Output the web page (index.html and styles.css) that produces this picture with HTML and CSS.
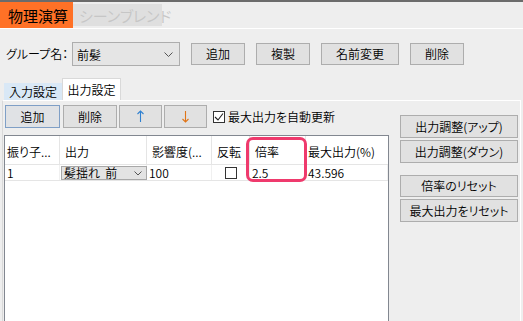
FILE: index.html
```html
<!DOCTYPE html>
<html lang="ja">
<head>
<meta charset="utf-8">
<title>物理演算</title>
<link rel="stylesheet" href="styles.css">
</head>
<body>
<div class="topline"></div>
<div class="modebar">
  <div class="mode active">物理演算</div>
  <div class="mode inactive">シーンブレンド</div>
</div>
<div class="grouprow">
  <span class="glabel">グループ名：</span>
  <div class="combo">
    <span>前髪</span>
    <svg class="chev" width="9" height="5" viewBox="0 0 9 5"><polyline points="0.5,0.5 4.5,4.5 8.5,0.5" fill="none" stroke="#555" stroke-width="1"/></svg>
  </div>
  <button class="btn w54">追加</button>
  <button class="btn w54">複製</button>
  <button class="btn w78">名前変更</button>
  <button class="btn w54">削除</button>
</div>
<div class="tabs">
  <div class="tab">入力設定</div>
  <div class="tab selected">出力設定</div>
</div>
<div class="panel">
  <div class="leftcol">
    <div class="toolbar">
      <button class="btn tb-add">追加</button>
      <button class="btn tb-del">削除</button>
      <button class="btn tb-arrow">
        <svg width="9" height="13" viewBox="0 0 9 13"><line x1="4.5" y1="1" x2="4.5" y2="12" stroke="#2f80d0" stroke-width="1.1"/><polyline points="1.5,4 4.5,1 7.5,4" fill="none" stroke="#2f80d0" stroke-width="1.1"/></svg>
      </button>
      <button class="btn tb-arrow">
        <svg width="9" height="13" viewBox="0 0 9 13"><line x1="4.5" y1="1" x2="4.5" y2="12" stroke="#e07518" stroke-width="1.1"/><polyline points="1.5,9 4.5,12 7.5,9" fill="none" stroke="#e07518" stroke-width="1.1"/></svg>
      </button>
      <span class="check">
        <span class="box"><svg width="10" height="10" viewBox="0 0 10 10"><polyline points="1,5 4,8 9,1.5" fill="none" stroke="#222" stroke-width="1.1"/></svg></span>
        <span class="checklabel">最大出力を自動更新</span>
      </span>
    </div>
    <div class="grid">
      <div class="row head">
        <div class="c first">振り子...</div>
        <div class="c">出力</div>
        <div class="c">影響度(...</div>
        <div class="c">反転</div>
        <div class="c">倍率</div>
        <div class="c last">最大出力(%)</div>
      </div>
      <div class="row data">
        <div class="c">1</div>
        <div class="c combo-cell">
          <div class="cellcombo">
            <span>髪揺れ&nbsp;&nbsp;前</span>
            <svg width="8" height="5" viewBox="0 0 8 5"><polyline points="0.5,0.5 4,4 7.5,0.5" fill="none" stroke="#555" stroke-width="1"/></svg>
          </div>
        </div>
        <div class="c">100</div>
        <div class="c center"><span class="cbox"></span></div>
        <div class="c">2.5</div>
        <div class="c">43.596</div>
      </div>
      <div class="hl"></div>
    </div>
  </div>
  <div class="rightcol">
    <button class="btn side">出力調整(アップ)</button>
    <button class="btn side">出力調整(ダウン)</button>
    <button class="btn side sep">倍率のリセット</button>
    <button class="btn side">最大出力をリセット</button>
  </div>
</div>
</body>
</html>
```
FILE: styles.css
```css
* { box-sizing: border-box; }
html, body { margin: 0; padding: 0; }
body {
  width: 523px;
  height: 321px;
  overflow: hidden;
  background: #eeeeee;
  font-family: "Noto Sans CJK JP", sans-serif;
  font-weight: 350;
  font-size: 12px;
  color: #000;
  font-feature-settings: "palt";
}
.topline { height: 2px; background: #6b6b6b; }
.modebar {
  display: flex;
  align-items: flex-start;
  height: 27px;
  border-bottom: 1px solid #ffffff;
}
.mode { font-size: 15px; white-space: nowrap; }
.mode.active {
  width: 73px;
  height: 26px;
  background: #ff7126;
  padding-left: 8px;
  line-height: 28px;
  font-weight: 400;
}
.mode.inactive {
  margin-top: 2px;
  width: 89px;
  height: 22px;
  background: #dfdfdf;
  color: #c6c6c6;
  padding-left: 6px;
  line-height: 24px;
}
.grouprow {
  display: flex;
  align-items: center;
  height: 24px;
  margin-top: 13px;
  padding-left: 6px;
}
.glabel { width: 66px; line-height: 24px; }
.combo {
  width: 108px;
  height: 24px;
  border: 1px solid #adadad;
  background: #e5e5e5;
  display: flex;
  align-items: center;
  justify-content: space-between;
  padding: 0 6px 0 4px;
}
.btn {
  height: 22px;
  padding: 0;
  background: #e1e1e1;
  border: 1px solid #adadad;
  font-family: inherit;
  font-weight: inherit;
  font-size: 12px;
  font-feature-settings: "palt";
  color: #000;
  line-height: 18px;
  display: flex;
  align-items: center;
  justify-content: center;
}
.grouprow .btn { margin-left: 11px; }
.w54 { width: 54px; }
.w78 { width: 78px; }
.tabs {
  display: flex;
  align-items: flex-end;
  height: 22px;
  margin-top: 12px;
  padding-left: 4px;
}
.tab {
  width: 58px;
  height: 17px;
  background: #d9e8f6;
  text-align: center;
  line-height: 17px;
}
.tab.selected {
  width: 59px;
  height: 22px;
  background: #ffffff;
  border: 1px solid #d9d9d9;
  border-bottom: none;
  line-height: 21px;
}
.panel {
  margin: 0 2px;
  height: 221px;
  border-top: 1px solid #ffffff;
  border-left: 1px solid #d9d9d9;
  border-right: 1px solid #ffffff;
  padding-left: 1px;
  display: flex;
}
.leftcol { width: 385px; }
.toolbar {
  display: flex;
  align-items: center;
  height: 23px;
  margin-top: 4px;
}
.toolbar .btn { height: 23px; }
.tb-add { width: 55px; margin-left: 1px; border-color: #7f9fc6; background: #e0e2e5; }
.tb-del { width: 54px; margin-left: 3px; }
.tb-arrow { width: 43px; margin-left: 2px; }
.check { display: flex; align-items: center; margin-left: 6px; }
.box {
  width: 12px;
  height: 12px;
  border: 1px solid #333;
  background: #fff;
  display: flex;
  align-items: center;
  justify-content: center;
}
.checklabel { margin-left: 3px; }
.grid {
  position: relative;
  margin-top: 7px;
  height: 200px;
  background: #ffffff;
  border: 1px solid #828790;
  border-bottom: none;
}
.row {
  display: grid;
  grid-template-columns: 55px 87px 65px 38px 56px 82px;
}
.row.head { height: 29px; border-bottom: 1px solid #e5e5e5; }
.row.head .c {
  display: flex;
  align-items: center;
  padding-left: 5px;
  padding-top: 2px;
  border-right: 1px solid #e5e5e5;
  white-space: nowrap;
  overflow: hidden;
}
.row.head .c.first { padding-left: 2px; }
.row.head .c.last { padding-left: 2px; border-right: none; }
.row.data { height: 16px; border-bottom: 1px solid #e5e5e5; }
.row.data .c {
  padding-left: 2px;
  line-height: 15px;
  border-right: 1px solid #f0f0f0;
  white-space: nowrap;
}
.row.data .c.combo-cell { padding: 1px 0 0 1px; }
.cellcombo {
  height: 14px;
  width: 86px;
  background: #e3e3e3;
  border: 1px solid #a8a8a8;
  display: flex;
  align-items: center;
  justify-content: space-between;
  padding: 0 4px 0 2px;
  line-height: 12px;
}
.row.data .c.center { display: flex; justify-content: center; align-items: center; padding-left: 0; }
.cbox { width: 12px; height: 12px; border: 1px solid #333; background: #fff; }
.hl {
  position: absolute;
  left: 241px;
  top: 1px;
  width: 61px;
  height: 45px;
  border: 3px solid #ef3a6d;
  border-radius: 7px;
}
.rightcol {
  width: 118px;
  margin-left: 11px;
  padding-top: 14px;
  display: flex;
  flex-direction: column;
}
.btn.side { width: 118px; height: 23px; margin-bottom: 2px; }
.btn.side.sep { margin-top: 10px; height: 22px; }
```
